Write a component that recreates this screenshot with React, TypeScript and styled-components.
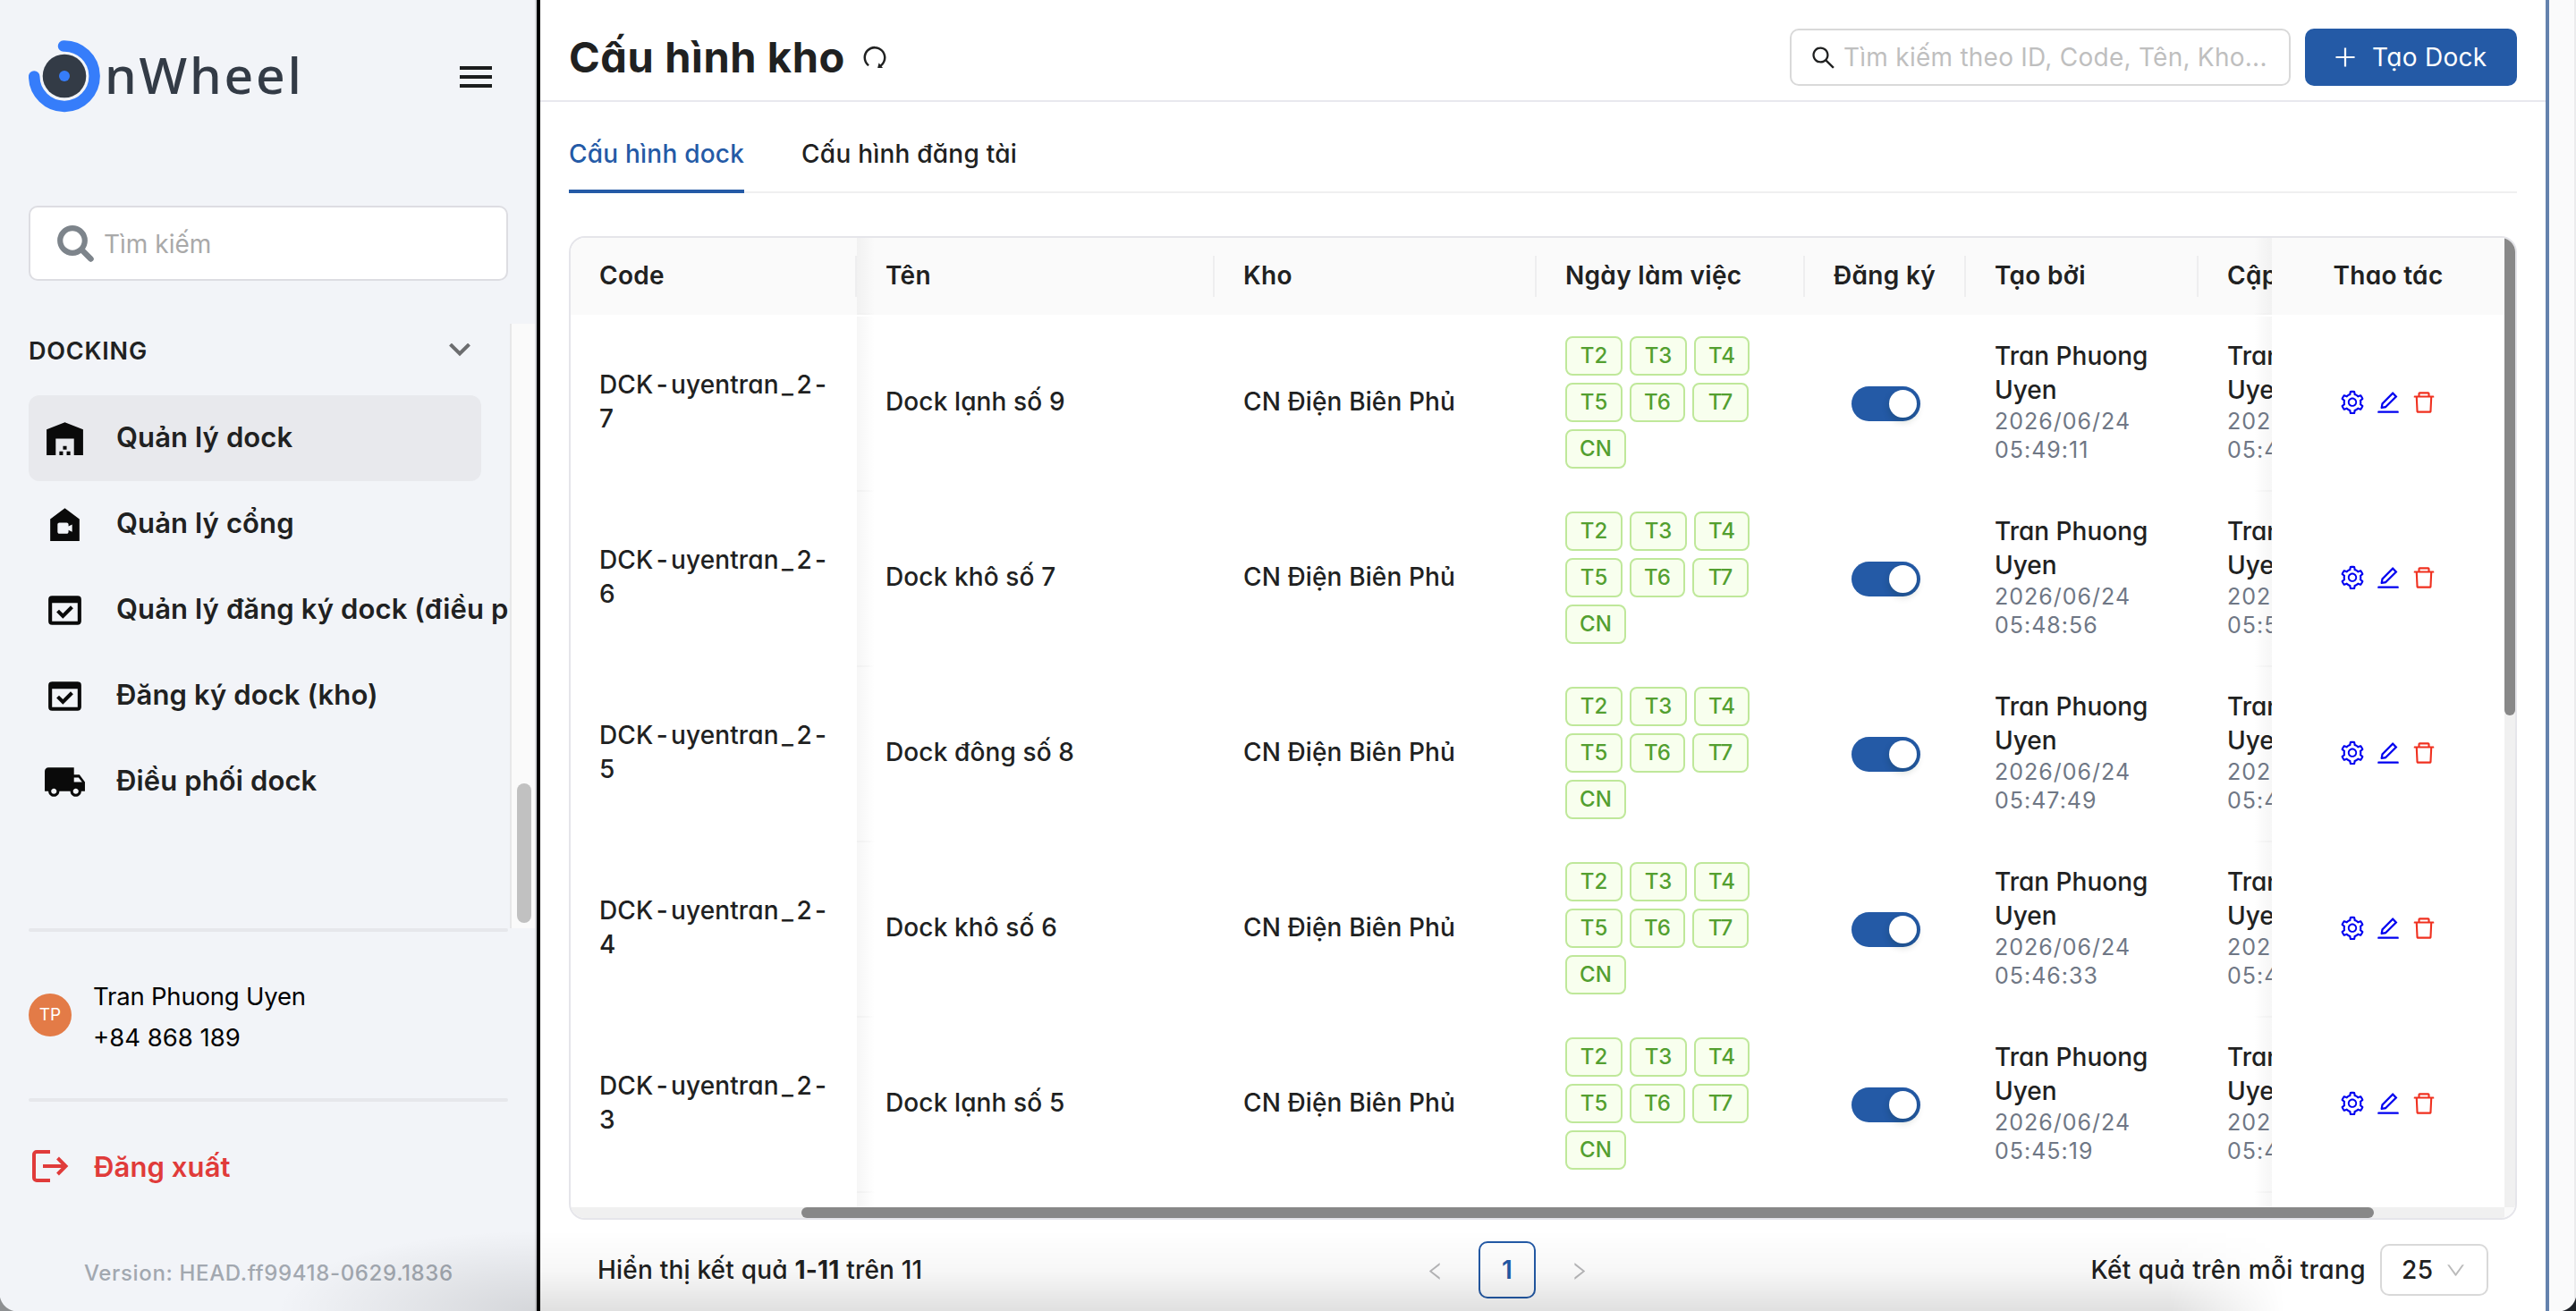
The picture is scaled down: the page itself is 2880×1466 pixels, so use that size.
import React from "react"
import styled, { createGlobalStyle } from "styled-components"
import {
  AiOutlineDelete,
  AiOutlineDown,
  AiOutlineEdit,
  AiOutlineLeft,
  AiOutlinePlus,
  AiOutlineRedo,
  AiOutlineRight,
  AiOutlineSearch,
  AiOutlineSetting,
} from "react-icons/ai"
import {
  MdCameraIndoor,
  MdDomainVerification,
  MdLocalShipping,
  MdWarehouse,
} from "react-icons/md"

const colors = {
  black: "#000",
  blue: "#245aa6",
  border: "#e5e5ea",
  ink: "#202121",
  muted: "#6f7785",
  red: "#e03b3a",
  sidebar: "#f2f4f8",
}

const GlobalStyle = createGlobalStyle`
  * {
    box-sizing: border-box;
  }

  body {
    background: #fff;
    font-family: Inter, "Liberation Sans", sans-serif;
    margin: 0;
  }

  svg {
    display: block;
    flex: none;
  }
`

const Page = styled.div`
  display: flex;
  height: 1466px;
  overflow: hidden;
  position: relative;
  width: 2880px;
`

const Sidebar = styled.aside`
  background: ${colors.sidebar};
  border-right: 2px solid #d9dade;
  display: flex;
  flex: none;
  flex-direction: column;
  width: 600px;
`

const Brand = styled.div`
  align-items: center;
  display: flex;
  height: 170px;
  padding: 0 48px 0 32px;
`

const BrandName = styled.span`
  color: #333b46;
  flex: 1;
  font-family: "Noto Sans", sans-serif;
  font-size: 57px;
  font-weight: 500;
  letter-spacing: 2.8px;
  line-height: 80px;
  padding: 0 0 5px 1px;
`

const Burger = styled.div`
  display: grid;
  gap: 6px;
  margin-top: 2px;
  width: 36px;

  i {
    background: #1b1d1d;
    height: 4px;
  }
`

const SideSearch = styled.div`
  align-items: center;
  background: #fff;
  border: 2px solid #dddde2;
  border-radius: 10px;
  color: #a9a9a9;
  display: flex;
  font-size: 28px;
  gap: 11px;
  height: 84px;
  line-height: 34px;
  margin: 60px 30px 0 32px;
  padding-left: 30px;

  span {
    padding-top: 2px;
  }
`

const Nav = styled.nav`
  display: flex;
  height: 676px;
  margin-top: 48px;
`

const NavList = styled.div`
  flex: 1;
  overflow: hidden;
  padding-left: 32px;
`

const NavTrack = styled.div`
  background: #fafafa;
  border-left: 2px solid #e7e7e8;
  flex: none;
  padding: 514px 4px 0 6px;
  width: 28px;
`

const NavThumb = styled.div`
  background: #c1c1c1;
  border-radius: 8px;
  height: 156px;
`

const NavTitle = styled.div`
  align-items: center;
  color: ${colors.ink};
  display: flex;
  font-size: 27px;
  font-weight: 600;
  height: 60px;
  justify-content: space-between;
  letter-spacing: 0.8px;
  margin-bottom: 20px;
  padding: 0 44px 0 0;
`

const NavItem = styled.div<{ $active?: boolean }>`
  align-items: center;
  background: ${props => (props.$active ? "#e8e9ed" : "transparent")};
  border-radius: 12px;
  color: ${colors.ink};
  display: flex;
  font-size: 31px;
  font-weight: 600;
  gap: 33px;
  height: 96px;
  letter-spacing: 0.12px;
  padding-left: 16px;
  white-space: nowrap;
  width: 506px;

  svg {
    color: #0a0a0a;
  }

  span {
    padding-bottom: 3px;
  }
`

const SideRule = styled.div`
  background: #e6e7eb;
  border-radius: 2px;
  height: 4px;
  margin: 0 30px 0 32px;
`

const Account = styled.div`
  align-items: center;
  color: #000;
  display: flex;
  font-size: 27.5px;
  gap: 24px;
  height: 186px;
  line-height: 46px;
  padding-left: 32px;
`

const AccountText = styled.div`
  padding-top: 4px;

  &::first-line {
    letter-spacing: -0.2px;
  }
`

const Avatar = styled.div`
  background: #e37b47;
  border-radius: 50%;
  color: #fff;
  font-size: 19px;
  height: 48px;
  line-height: 48px;
  text-align: center;
  width: 48px;
`

const Logout = styled.div`
  align-items: center;
  color: ${colors.red};
  display: flex;
  font-size: 31px;
  font-weight: 600;
  gap: 25px;
  height: 144px;
  letter-spacing: 0.1px;
  padding-left: 32px;
`

const Version = styled.div`
  color: #a2a8b0;
  font-size: 24px;
  font-weight: 500;
  letter-spacing: 0.65px;
  line-height: 30px;
  margin-top: 33px;
  padding-left: 94px;
`

const Seam = styled.div`
  background: ${colors.black};
  flex: none;
  width: 4px;
`

const Main = styled.main`
  color: ${colors.ink};
  display: flex;
  flex: none;
  flex-direction: column;
  font-feature-settings: "cv11";
  font-size: 28px;
  font-weight: 500;
  width: 2242px;
`

const Gutter = styled.div`
  background: #fafafb;
  border-left: 4px solid #6482ad;
  border-right: 2px solid #ebebed;
  flex: 1;
`

const Header = styled.header`
  align-items: center;
  border-bottom: 2px solid #e8e8ee;
  display: flex;
  height: 114px;
  padding: 16px 32px 0;
`

const Title = styled.h1`
  font-size: 47px;
  font-weight: 700;
  letter-spacing: 0.6px;
  line-height: 60px;
  margin: 0;
`

const ReloadSlot = styled.span`
  flex: 1;
  padding-left: 17px;
`

const SearchBox = styled.div`
  align-items: center;
  border: 2px solid #d9d9d9;
  border-radius: 10px;
  color: #bfbfbf;
  display: flex;
  font-size: 28px;
  font-weight: 400;
  gap: 7px;
  height: 64px;
  letter-spacing: 0.25px;
  margin-right: 16px;
  padding-left: 20px;
  white-space: nowrap;
  width: 560px;

  svg {
    color: ${colors.ink};
  }
`

const CreateButton = styled.button`
  align-items: center;
  background: ${colors.blue};
  border: 0;
  border-radius: 10px;
  color: #fff;
  display: flex;
  font-family: inherit;
  font-feature-settings: inherit;
  font-size: 28px;
  font-weight: 400;
  gap: 15px;
  height: 64px;
  letter-spacing: 0.3px;
  padding: 0 0 0 30px;
  width: 237px;
`

const Tabs = styled.div`
  border-bottom: 2px solid #efeff0;
  display: flex;
  gap: 64px;
  height: 102px;
  margin: 0 32px;
`

const Tab = styled.div<{ $active?: boolean }>`
  border-bottom: 4px solid ${props => (props.$active ? colors.blue : "transparent")};
  color: ${props => (props.$active ? colors.blue : colors.ink)};
  height: 102px;
  letter-spacing: 0.22px;
  line-height: 36px;
  padding-top: 40px;
  white-space: nowrap;
`

const TableFrame = styled.section`
  border: 2px solid ${colors.border};
  border-radius: 18px;
  display: grid;
  grid-template-columns: 1fr 12px;
  grid-template-rows: 1084px 12px;
  height: 1100px;
  margin: 48px 32px 0;
  overflow: hidden;
`

const TableView = styled.div`
  overflow: hidden;
`

const Row = styled.div`
  display: grid;
  grid-template-columns: 320px 400px 360px 300px 180px 260px 82px 260px;
  height: 196px;
`

const HeadRow = styled(Row)`
  font-weight: 600;
  height: 88px;
  letter-spacing: 0.3px;
`

const Cell = styled.div<{ $center?: boolean; $shade?: "left" | "right" }>`
  align-items: center;
  background: ${props => {
    if (!props.$shade) return "none"
    const to = props.$shade === "left" ? "right" : "left"
    return `linear-gradient(to ${to}, #f0f0f0, transparent 20px) 0 100% / 100% 2px no-repeat,
      linear-gradient(to ${to}, rgba(0, 0, 0, 0.035), transparent 20px)`
  }};
  display: flex;
  justify-content: ${props => (props.$center ? "center" : "flex-start")};
  line-height: 38px;
  overflow: hidden;
  padding: 0 0 6px ${props => (props.$center ? 0 : 32)}px;
  white-space: nowrap;
`

const TextCell = styled(Cell)`
  letter-spacing: 0.12px;
`

const HeadCell = styled(Cell)<{ $line?: boolean }>`
  background-color: #fafafa;
  border-bottom: 2px solid #fff;
  position: relative;
  padding-bottom: 2px;

  &::after {
    background: ${props => (props.$line ? "#eeeeef" : "transparent")};
    content: "";
    height: 46px;
    position: absolute;
    right: 0;
    top: 20px;
    width: 2px;
  }
`

const Mark = styled.span`
  margin: 0 3.3px;
`

const TagList = styled.div`
  display: flex;
  flex-wrap: wrap;
  gap: 8px;
  margin-top: 2px;
  width: 220px;
`

const Tag = styled.span<{ $width: number }>`
  background: #f8ffee;
  border: 2px solid #bfe89a;
  border-radius: 8px;
  color: #539f30;
  font-size: 24px;
  height: 44px;
  line-height: 39px;
  text-align: center;
  width: ${props => props.$width}px;
`

const Switch = styled.span`
  background: ${colors.blue};
  border-radius: 20px;
  display: flex;
  height: 39px;
  justify-content: flex-end;
  margin-left: 1px;
  margin-top: 5px;
  padding: 4px;
  width: 77px;

  &::after {
    background: #fff;
    border-radius: 50%;
    box-shadow: 0 4px 8px rgba(0, 35, 11, 0.2);
    content: "";
    height: 31px;
    width: 31px;
  }
`

const Author = styled.div`
  small {
    color: ${colors.muted};
    display: block;
    font-size: 25px;
    font-weight: 400;
    letter-spacing: 1px;
    line-height: 32px;
  }
`

const Actions = styled.div`
  color: #0000f0;
  display: flex;
  gap: 10px;
  margin-top: 2px;

  svg:last-child {
    color: #f0301f;
  }
`

const VerticalTrack = styled.div`
  background: #f0f0f0;

  &::after {
    background: #888;
    border-radius: 0 10px 6px 6px;
    content: "";
    display: block;
    height: 534px;
  }
`

const HorizontalTrack = styled.div`
  background: #f0f0f0;
  padding: 0 146px 0 258px;

  &::after {
    background: #888;
    border-radius: 6px;
    content: "";
    display: block;
    height: 12px;
  }
`

const TrackCorner = styled.div`
  background: #fafafa;
`

const Footer = styled.footer`
  align-items: center;
  display: grid;
  grid-template-columns: 924px auto 1fr;
  height: 64px;
  letter-spacing: 0.2px;
  margin: 24px 64px 0;

  b {
    font-weight: 700;
  }
`

const Pager = styled.div`
  align-items: center;
  color: #b9b9bb;
  display: flex;
  gap: 36px;

  svg {
    margin-top: 3px;
  }
`

const CurrentPage = styled.span`
  background: #fff;
  border: 2px solid ${colors.blue};
  border-radius: 10px;
  color: ${colors.blue};
  font-weight: 600;
  height: 64px;
  line-height: 60px;
  text-align: center;
  width: 64px;
`

const PageSize = styled.div`
  align-items: center;
  display: flex;
  gap: 16px;
  justify-content: flex-end;
  letter-spacing: 0.4px;
`

const Select = styled.span`
  align-items: center;
  background: #fff;
  border: 2px solid #d9d9d9;
  border-radius: 10px;
  color: ${colors.ink};
  display: flex;
  height: 58px;
  justify-content: space-between;
  padding: 0 22px;
  width: 121px;

  svg {
    color: #bbb;
  }
`

// soft shade along the lower window edge
const SideShade = styled.div`
  background: radial-gradient(ellipse 290px 90px at 100% 100%, rgba(0, 0, 0, 0.12), transparent);
  bottom: 0;
  height: 90px;
  left: 260px;
  pointer-events: none;
  position: absolute;
  width: 340px;
`

const MainShade = styled.div`
  background: linear-gradient(transparent, rgba(0, 0, 0, 0.03) 50%, rgba(0, 0, 0, 0.12));
  bottom: 0;
  height: 90px;
  left: 604px;
  mask-image: linear-gradient(to right, #000 1820px, transparent 1950px);
  pointer-events: none;
  position: absolute;
  width: 1960px;
`

const Corner = styled.div<{ $side: "left" | "right" }>`
  background: radial-gradient(
    circle at ${props => (props.$side === "left" ? "100%" : "0")} 0,
    transparent 20px,
    ${props => (props.$side === "left" ? "#8e9092" : "#20242a")} 21px
  );
  bottom: 0;
  height: 20px;
  position: absolute;
  width: 20px;
  ${props => props.$side}: 0;
`

const Logo: React.FC = () => (
  <svg width="84" height="84" viewBox="0 0 84 84" fill="none">
    <path
      d="M39 8.5a33.7 33.7 0 1 1-32.8 33.9"
      stroke="#367dfa"
      strokeWidth="12.5"
      strokeLinecap="round"
    />
    <circle cx="40" cy="42" r="24.3" fill="#333b46" />
    <circle cx="40" cy="42" r="6" fill="#367dfa" />
  </svg>
)

const Magnifier: React.FC = () => (
  <svg width="41" height="41" viewBox="0 0 41 41" fill="none" stroke="#7d848b">
    <circle cx="17" cy="17" r="13.8" strokeWidth="6.2" />
    <path d="M28 28l9.5 9.5" strokeWidth="6.5" strokeLinecap="round" />
  </svg>
)

const Chevron: React.FC = () => (
  <svg width="24" height="16" viewBox="0 0 24 16" fill="none">
    <path d="M1.5 1L12 11.500 22.500 1" stroke="#6c6d6f" strokeWidth="4" />
  </svg>
)

const LogoutIcon: React.FC = () => (
  <svg width="48" height="48" viewBox="0 0 48 48" fill="none" stroke={colors.red} strokeWidth="4">
    <path d="M24 8H9a3 3 0 0 0-3 3v26a3 3 0 0 0 3 3h15" />
    <path d="M16 24h26M32.500 15l9 9-9 9" />
  </svg>
)

const menu = [
  { icon: MdWarehouse, label: "Quản lý dock" },
  { icon: MdCameraIndoor, label: "Quản lý cổng" },
  { icon: MdDomainVerification, label: "Quản lý đăng ký dock (điều phối)" },
  { icon: MdDomainVerification, label: "Đăng ký dock (kho)" },
  { icon: MdLocalShipping, label: "Điều phối dock" },
]

const days = [
  { name: "T2", width: 64 },
  { name: "T3", width: 64 },
  { name: "T4", width: 62 },
  { name: "T5", width: 64 },
  { name: "T6", width: 62 },
  { name: "T7", width: 63 },
  { name: "CN", width: 68 },
]

const docks = [
  { id: 7, name: "Dock lạnh số 9", created: "05:49:11", updated: "05:49:11" },
  { id: 6, name: "Dock khô số 7", created: "05:48:56", updated: "05:50:12" },
  { id: 5, name: "Dock đông số 8", created: "05:47:49", updated: "05:47:49" },
  { id: 4, name: "Dock khô số 6", created: "05:46:33", updated: "05:46:33" },
  { id: 3, name: "Dock lạnh số 5", created: "05:45:19", updated: "05:45:19" },
]

interface StampProps {
  time: string
}

const Stamp: React.FC<StampProps> = ({ time }) => (
  <Author>
    Tran Phuong
    <br />
    Uyen
    <small>2026/06/24</small>
    <small>{time}</small>
  </Author>
)

const App: React.FC = () => {
  return (
    <Page>
      <GlobalStyle />
      <Sidebar>
        <Brand>
          <Logo />
          <BrandName>nWheel</BrandName>
          <Burger>
            <i />
            <i />
            <i />
          </Burger>
        </Brand>
        <SideSearch>
          <Magnifier />
          <span>Tìm kiếm</span>
        </SideSearch>
        <Nav>
          <NavList>
            <NavTitle>
              DOCKING
              <Chevron />
            </NavTitle>
            {menu.map(({ icon: Icon, label }, index) => (
              <NavItem key={label} $active={index === 0}>
                <Icon size={49} />
                <span>{label}</span>
              </NavItem>
            ))}
          </NavList>
          <NavTrack>
            <NavThumb />
          </NavTrack>
        </Nav>
        <SideRule />
        <Account>
          <Avatar>TP</Avatar>
          <AccountText>
            Tran Phuong Uyen
            <br />
            +84 868 189
          </AccountText>
        </Account>
        <SideRule />
        <Logout>
          <LogoutIcon />
          Đăng xuất
        </Logout>
        <Version>Version: HEAD.ff99418-0629.1836</Version>
      </Sidebar>
      <Seam />
      <Main>
        <Header>
          <Title>Cấu hình kho</Title>
          <ReloadSlot>
            <AiOutlineRedo size={32} />
          </ReloadSlot>
          <SearchBox>
            <AiOutlineSearch size={31} />
            Tìm kiếm theo ID, Code, Tên, Kho...
          </SearchBox>
          <CreateButton>
            <AiOutlinePlus size={30} />
            Tạo Dock
          </CreateButton>
        </Header>
        <Tabs>
          <Tab $active>Cấu hình dock</Tab>
          <Tab>Cấu hình đăng tài</Tab>
        </Tabs>
        <TableFrame>
          <TableView>
            <HeadRow>
              <HeadCell $line>Code</HeadCell>
              <HeadCell $shade="left" $line>
                Tên
              </HeadCell>
              <HeadCell $line>Kho</HeadCell>
              <HeadCell $line>Ngày làm việc</HeadCell>
              <HeadCell $line>Đăng ký</HeadCell>
              <HeadCell $line>Tạo bởi</HeadCell>
              <HeadCell $shade="right">Cập nhật</HeadCell>
              <HeadCell $center>Thao tác</HeadCell>
            </HeadRow>
            {docks.map(dock => (
              <Row key={dock.id}>
                <TextCell>
                  <div>
                    DCK<Mark>-</Mark>uyentran<Mark>_</Mark>2<Mark>-</Mark>
                    <br />
                    {dock.id}
                  </div>
                </TextCell>
                <TextCell $shade="left">{dock.name}</TextCell>
                <TextCell>CN Điện Biên Phủ</TextCell>
                <Cell>
                  <TagList>
                    {days.map(day => (
                      <Tag key={day.name} $width={day.width}>
                        {day.name}
                      </Tag>
                    ))}
                  </TagList>
                </Cell>
                <Cell $center>
                  <Switch />
                </Cell>
                <Cell>
                  <Stamp time={dock.created} />
                </Cell>
                <Cell $shade="right">
                  <Stamp time={dock.updated} />
                </Cell>
                <Cell $center>
                  <Actions>
                    <AiOutlineSetting size={30} />
                    <AiOutlineEdit size={30} />
                    <AiOutlineDelete size={30} />
                  </Actions>
                </Cell>
              </Row>
            ))}
            <Row>
              <Cell />
              <Cell $shade="left" />
              <Cell />
              <Cell />
              <Cell />
              <Cell />
              <Cell $shade="right" />
            </Row>
          </TableView>
          <VerticalTrack />
          <HorizontalTrack />
          <TrackCorner />
        </TableFrame>
        <Footer>
          <div>
            Hiển thị kết quả <b>1-11</b> trên 11
          </div>
          <Pager>
            <AiOutlineLeft size={25} />
            <CurrentPage>1</CurrentPage>
            <AiOutlineRight size={25} />
          </Pager>
          <PageSize>
            Kết quả trên mỗi trang
            <Select>
              25
              <AiOutlineDown size={25} />
            </Select>
          </PageSize>
        </Footer>
      </Main>
      <Gutter />
      <SideShade />
      <MainShade />
      <Corner $side="left" />
      <Corner $side="right" />
    </Page>
  )
}

export default App
